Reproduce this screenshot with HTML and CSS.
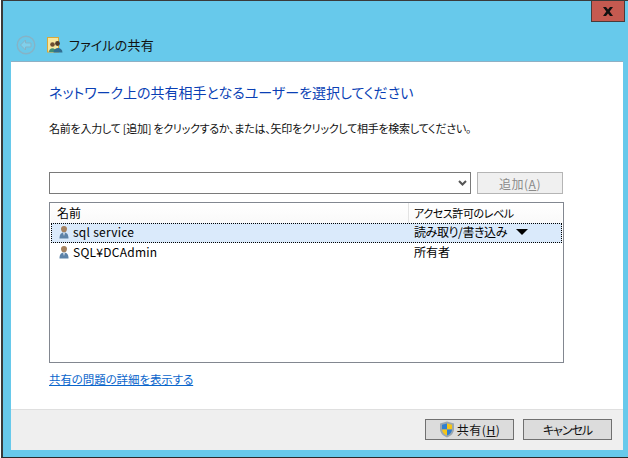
FILE: index.html
```html
<!DOCTYPE html>
<html lang="ja">
<head>
<meta charset="utf-8">
<title>ファイルの共有</title>
<link rel="stylesheet" href="styles.css">
</head>
<body>
<div class="window">
  <div class="caption">
    <button class="close" aria-label="閉じる"><svg width="12" height="9" viewBox="0 0 12 9"><path d="M1 0h3l2 2.500L8 0h3L7.700 4.500 11 9H8L6 6.500 4 9H1l3.300-4.500z" fill="#111"/></svg></button>
  </div>
  <div class="titlebar">
    <svg class="back" width="20" height="20" viewBox="0 0 20 20"><circle cx="10" cy="10" r="8.800" fill="#6bc8e8" stroke="#86b3c6" stroke-width="1.400"/><path d="M9.500 5 4.500 10l5 5v-3H15V8H9.500z" fill="#7fd0ec" stroke="#86b3c6" stroke-width="1"/></svg>
    <svg class="share-icon" width="16" height="16" viewBox="0 0 16 16"><rect x="0.500" y="0.500" width="11" height="14.500" fill="#f6e7a0" stroke="#d9a93a"/><circle cx="5.500" cy="7.500" r="2.300" fill="#6d4d32"/><path d="M2 15c0-5 7-5 7 0z" fill="#3f8f78"/><circle cx="10.500" cy="6.500" r="2.400" fill="#4f3a2a"/><path d="M6.500 15.500c0-6 9-6 9 0z" fill="#2f6f93"/></svg>
    <span class="title">ファイルの共有</span>
  </div>
  <div class="panel">
    <div class="content">
      <h1 class="heading">ネットワーク上の共有相手となるユーザーを選択してください</h1>
      <p class="hint">名前を入力して [追加] をクリックするか、または、矢印をクリックして相手を検索してください。</p>
      <div class="entry">
        <div class="combo"><svg width="9" height="6" viewBox="0 0 9 6"><path d="M1 1l3.500 3.500L8 1" fill="none" stroke="#555" stroke-width="2"/></svg></div>
        <button class="btn add" disabled>追加(<u>A</u>)</button>
      </div>
      <div class="list">
        <div class="list-head">
          <div class="col-name">名前</div>
          <div class="col-level">アクセス許可のレベル</div>
        </div>
        <div class="row selected">
          <div class="col-name"><svg class="user" width="14" height="14" viewBox="0 0 14 14"><path d="M7 1c2 0 3 1.300 3 3s-1.300 3.500-3 3.500S4 5.700 4 4s1-3 3-3z" fill="#a5825f"/><path d="M2.500 13.500c0-4.500 2-6 4.500-6s4.500 1.500 4.500 6z" fill="#5d83a8"/><path d="M6 7.500h2L7 11z" fill="#e3eaf0"/></svg><span class="user-name">sql service</span></div>
          <div class="col-level"><span class="level">読み取り/書き込み</span><svg class="caret" width="12" height="6" viewBox="0 0 12 6"><path d="M0 0h12L6 6z" fill="#000"/></svg></div>
        </div>
        <div class="row">
          <div class="col-name"><svg class="user" width="14" height="14" viewBox="0 0 14 14"><path d="M7 1c2 0 3 1.300 3 3s-1.300 3.500-3 3.500S4 5.700 4 4s1-3 3-3z" fill="#a5825f"/><path d="M2.500 13.500c0-4.500 2-6 4.500-6s4.500 1.500 4.500 6z" fill="#5d83a8"/><path d="M6 7.500h2L7 11z" fill="#e3eaf0"/></svg><span class="user-name">SQL¥DCAdmin</span></div>
          <div class="col-level">所有者</div>
        </div>
      </div>
      <a class="link" href="#">共有の問題の詳細を表示する</a>
    </div>
    <div class="footer">
      <button class="btn"><svg class="shield" width="16" height="17" viewBox="0 0 16 17"><path d="M8 .5 15 2.500V8c0 4-3 7-7 8.500C4 15 1 12 1 8V2.500z" fill="#9aa6b0"/><path d="M8 2.500v6H3V3.800z" fill="#2f7fd0"/><path d="M8 2.500l5 1.300v4.700H8z" fill="#f5c518"/><path d="M3 8.500h5v6C5 13.300 3 11 3 8.500z" fill="#f5c518"/><path d="M8 8.500h5c0 2.500-2 4.800-5 6z" fill="#2f7fd0"/></svg>共有(<u>H</u>)</button>
      <button class="btn cancel">キャンセル</button>
    </div>
  </div>
</div>
</body>
</html>
```
FILE: styles.css
```css
* { box-sizing: border-box; }
html, body { margin: 0; height: 100%; }
body {
  width: 628px;
  height: 458px;
  overflow: hidden;
  background: #ffffff;
  font-family: "Noto Sans CJK JP", "Noto Sans", sans-serif;
  font-feature-settings: "palt";
  font-size: 12px;
  color: #000;
}
.window {
  width: 628px;
  height: 458px;
  margin-left: 1px;
  background: #67c9eb;
  border-top: 1px solid #3a3a3a;
  border-left: 2px solid #3a3a3a;
  border-bottom: 1px solid #2a2a2a;
  display: flex;
  flex-direction: column;
  padding: 0 6px 7px 8px;
}
.caption { height: 21px; display: flex; justify-content: flex-end; margin-right: -2px; flex: none; }
.close {
  width: 34px;
  height: 21px;
  padding: 0;
  background: #c55a50;
  border: 1px solid #4a3a3a;
  border-top: 0;
  display: flex;
  align-items: center;
  justify-content: center;
}
.titlebar {
  height: 40px;
  flex: none;
  display: flex;
  align-items: center;
  margin-left: -3px;
  padding-top: 5px;
}
.back { margin-left: 8px; }
.share-icon { margin-left: 11px; }
.title { font-size: 13px; letter-spacing: .2px; margin-left: 6px; color: #111; }
.panel {
  flex: 1;
  display: flex;
  flex-direction: column;
  background: #fff;
  box-shadow: 0 -1px 0 #8fb0c4;
}
.content { flex: 1; padding: 19px 0 0 38px; display: flex; flex-direction: column; }
.heading { margin: 0; font-size: 14px; font-weight: 400; line-height: 22px; color: #0a3fb5; white-space: nowrap; }
.hint { margin: 17px 0 0; line-height: 16px; white-space: nowrap; color: #111; font-size: 11px; letter-spacing: -.25px; }
.entry { display: flex; justify-content: space-between; margin-top: 36px; height: 22px; width: 514px; flex: none; }
.combo {
  width: 422px;
  height: 22px;
  border: 1px solid #7a7a7a;
  display: flex;
  align-items: center;
  justify-content: flex-end;
  padding-right: 3px;
}
.btn {
  width: 89px;
  height: 21px;
  padding: 0;
  font: inherit;
  font-size: 12px;
  letter-spacing: .5px;
  color: #111;
  background: #dcdcdc;
  border: 1px solid #707070;
  display: flex;
  align-items: center;
  justify-content: center;
}
.btn.cancel { letter-spacing: -1px; }
.btn.add {
  width: 86px;
  height: 22px;
  background: #f0f0f0;
  border-color: #b5b5b5;
  color: #8a8a8a;
}
.list {
  width: 515px;
  height: 161px;
  margin-top: 8px;
  border: 1px solid #828790;
  padding: 0 1px;
  flex: none;
}
.list-head, .row { display: flex; height: 20px; align-items: center; line-height: 18px; }
.row { padding-bottom: 2px; }
.list-head { background: linear-gradient(#fff, #f9f9f9); }
.col-name { width: 357px; padding-left: 5px; display: flex; align-items: center; white-space: nowrap; }
.list-head .col-name { padding-left: 6px; }
.col-level { flex: 1; padding-left: 6px; display: flex; align-items: center; white-space: nowrap; }
.list-head .col-level { border-left: 1px solid #e3e3e3; height: 100%; padding-left: 5px; font-size: 11px; letter-spacing: -.4px; }
.row.selected { background: #daeafb; outline: 1px dotted #000; outline-offset: -1px; }
.user { margin-right: 2px; margin-left: 1px; }
.user-name { letter-spacing: .25px; }
.level { letter-spacing: -.4px; }
.caret { margin-left: 9px; }
.link { margin-top: 8px; color: #0a66cc; line-height: 16px; align-self: flex-start; font-size: 11.5px; letter-spacing: -.1px; }
.footer {
  height: 41px;
  flex: none;
  background: #efefef;
  border-top: 1px solid #dfdfdf;
  display: flex;
  justify-content: flex-end;
  gap: 9px;
  padding: 9px 11px 0 0;
}
.shield { margin-right: 2px; }
```
